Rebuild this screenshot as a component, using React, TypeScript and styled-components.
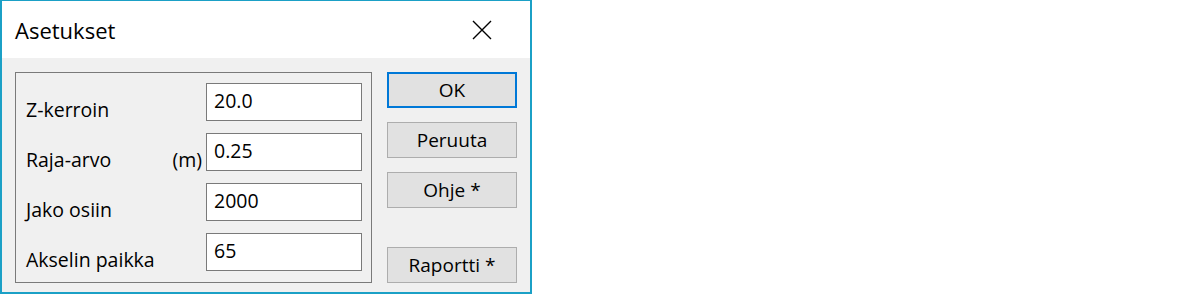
import styled, { createGlobalStyle } from "styled-components";

const Global = createGlobalStyle`
  html, body {
    margin: 0;
    padding: 0;
    background: #ffffff;
  }
  body {
    font-family: "Open Sans", "Noto Sans", sans-serif;
    color: #000000;
  }
`;

const Window = styled.div`
  width: 532px;
  height: 294px;
  box-sizing: border-box;
  border: 2px solid #1ba0c6;
  border-top-width: 1px;
  display: flex;
  flex-direction: column;
  background: #f0f0f0;
`;

const TitleBar = styled.div`
  height: 57px;
  flex: none;
  background: #ffffff;
  display: flex;
  align-items: center;
  justify-content: space-between;
  padding: 0 38px 0 13px;

  & h1 {
    margin: 0;
    font-size: 22px;
    font-weight: 400;
    line-height: 30px;
    padding-top: 1px;
  }
`;

const CloseButton = styled.button`
  border: 0;
  background: none;
  padding: 0;
  width: 20px;
  height: 20px;
  display: flex;
  cursor: pointer;
`;

const Body = styled.div`
  flex: 1;
  display: flex;
  gap: 15px;
  padding: 14px 13px 9px 13px;
`;

const GroupBox = styled.fieldset`
  margin: 0;
  width: 357px;
  box-sizing: border-box;
  border: 1px solid #7a7a7a;
  padding: 10px 9px 0 10px;
  display: flex;
  flex-direction: column;
  gap: 12px;
`;

const Row = styled.div`
  display: grid;
  grid-template-columns: 1fr auto 156px;
  column-gap: 4px;
  height: 38px;
`;

const Label = styled.label`
  align-self: end;
  font-size: 19.5px;
  line-height: 22px;
  white-space: nowrap;
`;

const Field = styled.input`
  width: 156px;
  height: 38px;
  box-sizing: border-box;
  border: 1px solid #7a7a7a;
  background: #ffffff;
  padding: 5px 7px 9px 7px;
  font-family: inherit;
  font-size: 19.5px;
  line-height: 22px;
  color: #000000;
  outline: none;
`;

const Buttons = styled.div`
  display: flex;
  flex-direction: column;
  gap: 14px;
  width: 130px;
`;

const Button = styled.button<{ $default?: boolean }>`
  height: 36px;
  box-sizing: border-box;
  background: #e1e1e1;
  border: ${({ $default }) => ($default ? "2px solid #0078d7" : "1px solid #adadad")};
  font-family: inherit;
  font-size: 19px;
  line-height: 22px;
  color: #000000;
  padding: 0;
  display: flex;
  align-items: center;
  justify-content: center;
  cursor: pointer;
`;

const BottomButton = styled(Button)`
  margin-top: auto;
`;

const settings = [
  { label: "Z-kerroin", unit: "", value: "20.0" },
  { label: "Raja-arvo", unit: "(m)", value: "0.25" },
  { label: "Jako osiin", unit: "", value: "2000" },
  { label: "Akselin paikka", unit: "", value: "65" },
];

export default function App() {
  return (
    <>
      <Global />
      <Window>
        <TitleBar>
          <h1>Asetukset</h1>
          <CloseButton aria-label="Sulje">
            <svg width="20" height="20" viewBox="0 0 20 20">
              <path d="M1 1 L19 19 M19 1 L1 19" stroke="#000" strokeWidth="1.4" fill="none" />
            </svg>
          </CloseButton>
        </TitleBar>
        <Body>
          <GroupBox>
            {settings.map((s) => (
              <Row key={s.label}>
                <Label>{s.label}</Label>
                <Label>{s.unit}</Label>
                <Field readOnly value={s.value} />
              </Row>
            ))}
          </GroupBox>
          <Buttons>
            <Button $default>OK</Button>
            <Button>Peruuta</Button>
            <Button>Ohje *</Button>
            <BottomButton>Raportti *</BottomButton>
          </Buttons>
        </Body>
      </Window>
    </>
  );
}
